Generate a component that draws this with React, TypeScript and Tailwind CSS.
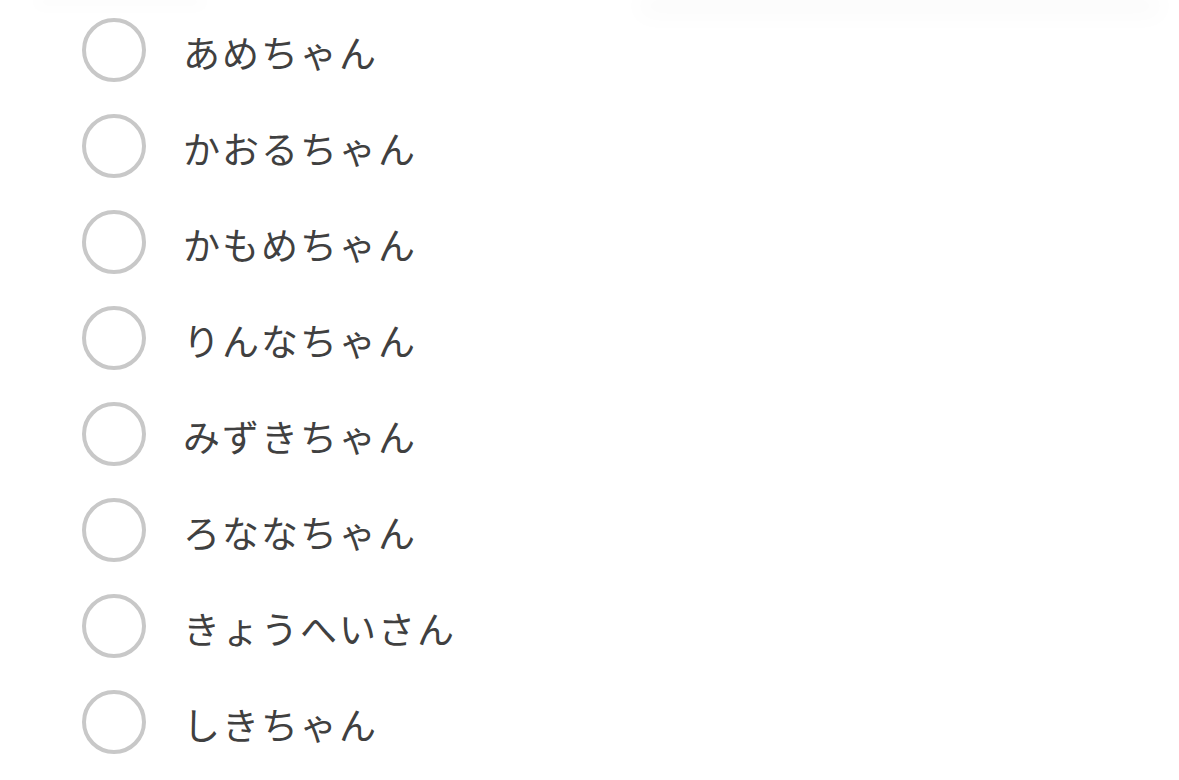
import React from 'react';

const names = [
  'あめちゃん',
  'かおるちゃん',
  'かもめちゃん',
  'りんなちゃん',
  'みずきちゃん',
  'ろななちゃん',
  'きょうへいさん',
  'しきちゃん',
];

export default function App() {
  return (
    <div className="relative w-[1179px] h-[780px] overflow-hidden bg-white font-['Noto_Sans_CJK_JP','Noto_Sans',sans-serif]">
      {/* faint shadows from the cards above */}
      <div className="flex h-0">
        <div className="ml-[40px] w-[160px] h-0 shadow-[0_2px_16px_6px_rgba(0,0,0,0.015)]" />
        <div className="ml-[450px] w-[500px] h-0 shadow-[0_6px_24px_12px_rgba(0,0,0,0.018)]" />
      </div>
      <ul className="flex flex-col pt-[2px]">
        {names.map((name) => (
          <li key={name} className="flex items-center h-[96px] pl-[82px]">
            <span className="w-[64px] h-[64px] shrink-0 rounded-full border-[4px] border-[#c8c8c8]" />
            <span className="ml-[37px] pt-[4px] text-[37px] leading-none tracking-[2px] text-[#404040]">
              {name}
            </span>
          </li>
        ))}
      </ul>
    </div>
  );
}
